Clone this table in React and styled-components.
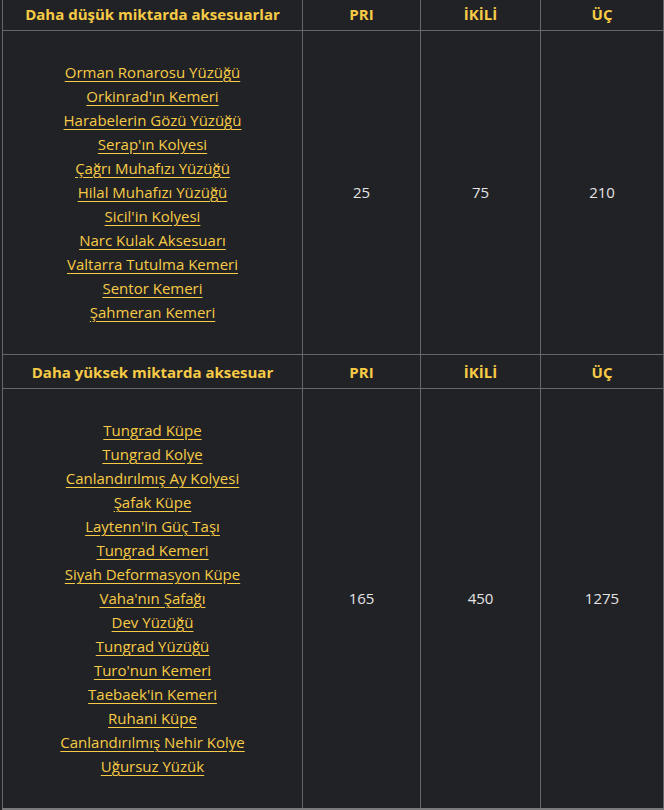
import React from "react"
import styled, { createGlobalStyle } from "styled-components"

const GlobalStyle = createGlobalStyle`
  html, body {
    margin: 0;
    padding: 0;
    background: #212226;
  }
  body {
    font-family: "Open Sans", "DejaVu Sans", sans-serif;
  }
`

const groups = [
  {
    title: "Daha düşük miktarda aksesuarlar",
    items: [
      "Orman Ronarosu Yüzüğü",
      "Orkinrad'ın Kemeri",
      "Harabelerin Gözü Yüzüğü",
      "Serap'ın Kolyesi",
      "Çağrı Muhafızı Yüzüğü",
      "Hilal Muhafızı Yüzüğü",
      "Sicil'in Kolyesi",
      "Narc Kulak Aksesuarı",
      "Valtarra Tutulma Kemeri",
      "Sentor Kemeri",
      "Şahmeran Kemeri",
    ],
    values: [25, 75, 210],
  },
  {
    title: "Daha yüksek miktarda aksesuar",
    items: [
      "Tungrad Küpe",
      "Tungrad Kolye",
      "Canlandırılmış Ay Kolyesi",
      "Şafak Küpe",
      "Laytenn'in Güç Taşı",
      "Tungrad Kemeri",
      "Siyah Deformasyon Küpe",
      "Vaha'nın Şafağı",
      "Dev Yüzüğü",
      "Tungrad Yüzüğü",
      "Turo'nun Kemeri",
      "Taebaek'in Kemeri",
      "Ruhani Küpe",
      "Canlandırılmış Nehir Kolye",
      "Uğursuz Yüzük",
    ],
    values: [165, 450, 1275],
  },
]

const columns = ["PRI", "İKİLİ", "ÜÇ"]

export default function App() {
  return (
    <>
      <GlobalStyle />
      <S.Wrap>
        <S.Table>
          <colgroup>
            <col style={{ width: 300 }} />
            <col style={{ width: 118 }} />
            <col style={{ width: 120 }} />
            <col style={{ width: 123 }} />
          </colgroup>
          {groups.map((g) => (
            <tbody key={g.title}>
              <tr>
                <S.Head>{g.title}</S.Head>
                {columns.map((c) => (
                  <S.Head key={c}>{c}</S.Head>
                ))}
              </tr>
              <tr>
                <S.Cell>
                  {g.items.map((it) => (
                    <S.Item key={it}>
                      <S.Link href="#">{it}</S.Link>
                    </S.Item>
                  ))}
                </S.Cell>
                {g.values.map((v, i) => (
                  <S.Cell key={i}>{v}</S.Cell>
                ))}
              </tr>
            </tbody>
          ))}
        </S.Table>
      </S.Wrap>
    </>
  )
}

const S = {
  Wrap: styled.div`
    padding: 0 0 0 2px;
    margin-top: -4px;
    width: 664px;
    height: 814px;
    overflow: hidden;
  `,

  Table: styled.table`
    border-collapse: collapse;
    table-layout: fixed;
    width: 662px;
    border-bottom: 2px solid #7a7a7c;
  `,

  Head: styled.th`
    height: 33px;
    padding: 0 6px;
    border: 1px solid #66666a;
    color: #f7cb45;
    font-size: 15px;
    font-weight: 700;
    text-align: center;
    vertical-align: middle;
  `,

  Cell: styled.td`
    padding: 29px 6px 30px;
    border: 1px solid #66666a;
    color: #e4e4e4;
    font-size: 15px;
    text-align: center;
    vertical-align: middle;
  `,

  Item: styled.div`
    line-height: 24px;
  `,

  Link: styled.a`
    color: #f7cb45;
    font-size: 15px;
    text-decoration: underline;
    text-underline-offset: 3px;
  `,
}
